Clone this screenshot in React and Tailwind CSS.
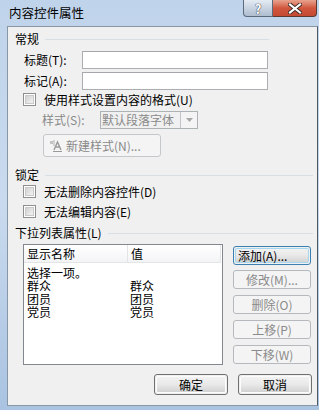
import React from "react";

const font = { fontFamily: '"Noto Sans CJK SC", "Liberation Sans", sans-serif' };

function CheckBox() {
  return (
    <span className="block w-[13px] h-[13px] shrink-0 border border-[#8e8f8f] bg-white p-px">
      <span className="block w-full h-full border border-[#c9c9c9] bg-gradient-to-br from-[#d2d2d2] to-[#f3f3f3]" />
    </span>
  );
}

function GroupTitle({ children, right }) {
  return (
    <div className="flex items-center h-[12px] pl-[7px]" style={{ marginRight: right }}>
      <span className="leading-[12px] whitespace-nowrap">{children}</span>
      <span className="flex-1 h-px bg-[#d5dfe5] ml-[6px]" />
    </div>
  );
}

function SideButton({ children, focused, className }) {
  if (focused) {
    return (
      <div className={"h-[19px] rounded-[3px] border border-[#3c7fb1] p-px " + className}>
        <div className="h-full rounded-[2px] border border-[#a6d7f0] bg-gradient-to-b from-[#f2f2f2] via-[#e8e8e8] to-[#d4d4d4] flex items-center pl-[2px] leading-[12px] text-black">
          {children}
        </div>
      </div>
    );
  }
  return (
    <div className={"h-[19px] rounded-[3px] border border-[#b5b9bd] bg-[#f4f4f4] flex items-center justify-center leading-[12px] text-[#8a8a8a] " + className}>
      {children}
    </div>
  );
}

function DialogButton({ children }) {
  return (
    <div className="w-[74px] h-[21px] rounded-[3px] border border-[#707070] p-px">
      <div className="h-full rounded-[2px] border border-[#fcfcfc] bg-gradient-to-b from-[#f2f2f2] via-[#e9e9e9] to-[#d2d2d2] flex items-center justify-center leading-[12px] text-black">
        {children}
      </div>
    </div>
  );
}

export default function App() {
  return (
    <div
      className="w-[319px] h-[410px] overflow-hidden bg-gradient-to-b from-[#bfd3ea] via-[#c9daee] to-[#a9c3e1] text-[12px] text-black"
      style={font}
    >
      {/* title bar */}
      <div className="flex h-[26px]">
        <span className="pl-[9px] pt-[6px] leading-[14px] text-[12.5px] text-black">内容控件属性</span>
        <div className="ml-auto mr-[2px] flex h-[17px]">
          <div className="w-[30px] h-full rounded-bl-[4px] border border-t-0 border-[#5b6b7c] bg-gradient-to-b from-[#e4ebf3] to-[#aebdcf] flex items-center justify-center text-white font-bold text-[13px] leading-none" style={{ textShadow: "0 0 1px #334, 0 0 1px #334" }}>
            ?
          </div>
          <div className="w-[44px] h-full rounded-br-[4px] border border-l-0 border-t-0 border-[#5b3a34] bg-gradient-to-b from-[#e8a38f] via-[#d0563d] to-[#c44a32] flex items-center justify-center">
            <svg width="14" height="11" viewBox="0 0 14 11">
              <path d="M2 1.5 L12 9.5 M12 1.5 L2 9.5" stroke="#3a2a28" strokeWidth="4" strokeLinecap="square" />
              <path d="M2 1.5 L12 9.5 M12 1.5 L2 9.5" stroke="#ffffff" strokeWidth="2.2" strokeLinecap="square" />
            </svg>
          </div>
        </div>
      </div>

      {/* client area */}
      <div className="ml-[7px] w-[311px] h-[380px] border border-[#8897a8] border-r-[#4e5863] bg-[#f0f0f0] flex flex-col">
        <div className="mt-[6px]">
          <GroupTitle right="48px">常规</GroupTitle>
        </div>

        <div className="mt-[6px] flex items-center h-[18px] pl-[16px]">
          <span className="w-[58px] leading-[12px]">标题(T):</span>
          <span className="w-[186px] h-[18px] border border-[#abadb3] border-t-[#a4a6ac] bg-white" />
        </div>
        <div className="mt-[3px] flex items-center h-[18px] pl-[16px]">
          <span className="w-[58px] leading-[12px]">标记(A):</span>
          <span className="w-[186px] h-[18px] border border-[#abadb3] border-t-[#a4a6ac] bg-white" />
        </div>

        <div className="mt-[3px] flex items-center h-[13px] pl-[15px] gap-[8px]">
          <CheckBox />
          <span className="leading-[12px]">使用样式设置内容的格式(U)</span>
        </div>

        <div className="mt-[5px] flex items-center h-[18px] pl-[34px] text-[#8a8a8a]">
          <span className="w-[58px] leading-[12px]">样式(S):</span>
          <div className="w-[98px] h-[18px] border border-[#adb2b5] bg-[#f0f0f0] flex items-center">
            <span className="flex-1 pl-[1px] leading-[12px] whitespace-nowrap">默认段落字体</span>
            <span className="w-[17px] h-full border-l border-[#c2c5c8] bg-[#f4f4f4] flex items-center justify-center">
              <svg width="7" height="4" viewBox="0 0 7 4">
                <path d="M0 0 H7 L3.5 4 Z" fill="#a8a8a8" />
              </svg>
            </span>
          </div>
        </div>

        <div className="mt-[5px] pl-[35px]">
          <div className="w-[118px] h-[23px] rounded-[3px] border border-[#c5c8cb] bg-[#f4f4f4] flex items-center pl-[6px] gap-[3px] text-[#8a8a8a]">
            <svg width="13" height="12" viewBox="0 0 13 12">
              <rect x="0" y="1" width="3" height="3" fill="#c4c4c4" />
              <rect x="3" y="0" width="2" height="6" fill="#d2d2d2" />
              <path d="M4 10 L7.5 2 L11 10 M5.5 7 H9.5" stroke="#9a9a9a" strokeWidth="1.4" fill="none" />
              <rect x="3" y="11" width="9" height="1" fill="#9a9a9a" />
            </svg>
            <span className="leading-[12px]">新建样式(N)...</span>
          </div>
        </div>

        <div className="mt-[12px]">
          <GroupTitle right="4px">锁定</GroupTitle>
        </div>

        <div className="mt-[4px] flex items-center h-[13px] pl-[15px] gap-[8px]">
          <CheckBox />
          <span className="leading-[12px]">无法删除内容控件(D)</span>
        </div>
        <div className="mt-[7px] flex items-center h-[13px] pl-[15px] gap-[8px]">
          <CheckBox />
          <span className="leading-[12px]">无法编辑内容(E)</span>
        </div>

        <div className="mt-[9px]">
          <GroupTitle right="4px">下拉列表属性(L)</GroupTitle>
        </div>

        <div className="mt-[5px] flex pl-[15px]">
          {/* list */}
          <div className="w-[200px] h-[121px] border border-[#828790] bg-white">
            <div className="flex h-[18px] w-[197px] border-b border-[#e3e4e6] bg-gradient-to-b from-white to-[#f3f4f6]">
              <span className="w-[104px] pl-[3px] flex items-center border-r border-[#e3e4e6] leading-[12px]">显示名称</span>
              <span className="flex-1 pl-[3px] flex items-center border-r border-[#e3e4e6] leading-[12px]">值</span>
            </div>
            <div className="pt-[3px] pl-[3px]">
              {[
                ["选择一项。", ""],
                ["群众", "群众"],
                ["团员", "团员"],
                ["党员", "党员"],
              ].map(([a, b]) => (
                <div key={a} className="flex h-[13px] items-center leading-[12px]">
                  <span className="w-[103px]">{a}</span>
                  <span>{b}</span>
                </div>
              ))}
            </div>
          </div>

          {/* side buttons */}
          <div className="ml-[10px] w-[78px] flex flex-col pt-[2px]">
            <SideButton focused className="">添加(A)...</SideButton>
            <SideButton className="mt-[5px]">修改(M)...</SideButton>
            <SideButton className="mt-[6px]">删除(O)</SideButton>
            <SideButton className="mt-[6px]">上移(P)</SideButton>
            <SideButton className="mt-[6px]">下移(W)</SideButton>
          </div>
        </div>

        <div className="mt-[9px] flex justify-end gap-[10px] pr-[5px]">
          <DialogButton>确定</DialogButton>
          <DialogButton>取消</DialogButton>
        </div>
      </div>
    </div>
  );
}
